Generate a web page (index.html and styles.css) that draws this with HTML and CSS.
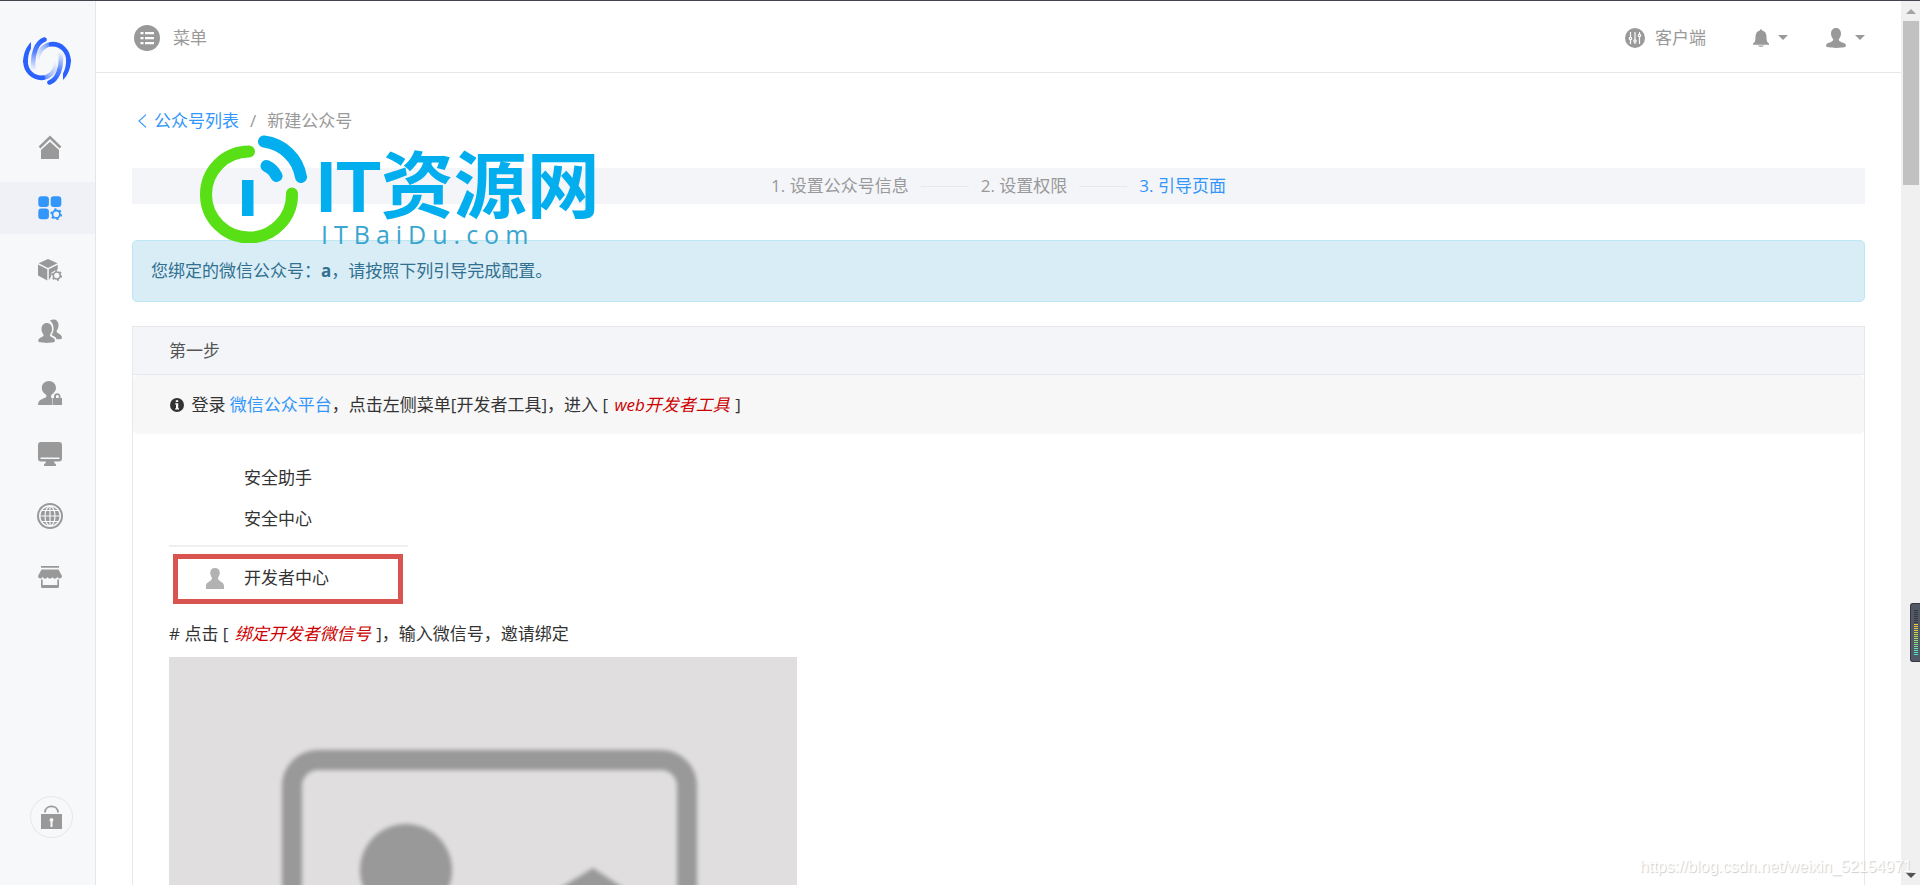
FILE: index.html
```html
<!DOCTYPE html>
<html lang="zh-CN">
<head>
<meta charset="utf-8">
<title>新建公众号</title>
<link rel="stylesheet" href="styles.css">
</head>
<body>
<div class="app">
  <aside class="sidebar">
    <a class="brand" href="#" aria-label="logo">
      <svg class="line-art" width="48" height="48" viewBox="0 0 48 48" stroke-width="4.600" stroke-linecap="round">
        <defs>
          <linearGradient id="fadeA" gradientUnits="userSpaceOnUse" x1="30" y1="44" x2="38" y2="15"><stop offset="0" stop-color="#2b62ff"/><stop offset=".4" stop-color="#2b62ff" stop-opacity=".8"/><stop offset="1" stop-color="#2b62ff" stop-opacity="0"/></linearGradient>
          <linearGradient id="fadeB" gradientUnits="userSpaceOnUse" x1="18" y1="4" x2="10" y2="33"><stop offset="0" stop-color="#2b62ff"/><stop offset=".4" stop-color="#2b62ff" stop-opacity=".8"/><stop offset="1" stop-color="#2b62ff" stop-opacity="0"/></linearGradient>
          <linearGradient id="fadeC" gradientUnits="userSpaceOnUse" x1="34" y1="8" x2="14" y2="22"><stop offset="0" stop-color="#2b62ff"/><stop offset=".5" stop-color="#2b62ff" stop-opacity=".4"/><stop offset="1" stop-color="#2b62ff" stop-opacity="0"/></linearGradient>
          <linearGradient id="fadeD" gradientUnits="userSpaceOnUse" x1="14" y1="40" x2="34" y2="26"><stop offset="0" stop-color="#2b62ff"/><stop offset=".5" stop-color="#2b62ff" stop-opacity=".4"/><stop offset="1" stop-color="#2b62ff" stop-opacity="0"/></linearGradient>
        </defs>
        <path d="M26.500 45.500C34 43 39.500 31 37.500 16" stroke="url(#fadeA)"/>
        <path d="M21.500 2.500C14 5 8.500 17 10.500 32" stroke="url(#fadeB)"/>
        <path d="M14 24C15 15 20 8.500 28 7.200" stroke="url(#fadeC)"/>
        <path d="M34 24C33 33 28 39.500 20 40.800" stroke="url(#fadeD)"/>
        <path d="M28 7.200C38 6.500 45.500 14 45.500 24" stroke="#2b62ff"/>
        <path d="M43.200 22H47.900C48 31 45 38 40 43V36.500C42.500 32 43.200 27 43.200 22Z" fill="#2b62ff" stroke="none"/>
        <path d="M20 40.800C10 41.500 2.500 34 2.500 24" stroke="#2b62ff"/>
        <path d="M4.800 26H.1C0 17 3 10 8 5V11.500C5.500 16 4.800 21 4.800 26Z" fill="#2b62ff" stroke="none"/>
      </svg>
    </a>
    <nav class="menu">
      <a href="#" aria-label="首页"><svg class="icon" viewBox="0 0 24 24"><path d="M1.500 12.500 12 2.300l10.500 10.200" fill="none" stroke="currentColor" stroke-width="2.500"/><path d="M12 6.800 21 15v8.500a.5.5 0 0 1-.5.5h-17a.5.5 0 0 1-.5-.5V15z"/></svg></a>
      <a class="active" href="#" aria-label="应用"><svg class="icon" viewBox="0 0 24 24"><rect x=".3" y=".3" width="10.600" height="10.600" rx="3"/><rect x="12.700" y=".3" width="10.600" height="10.600" rx="3"/><rect x=".3" y="12.600" width="10.600" height="10.600" rx="3"/><g fill="none" stroke="currentColor"><circle cx="18.200" cy="18.200" r="3.700" stroke-width="1.800"/><circle cx="18.200" cy="18.200" r="5" stroke-width="1.800" stroke-dasharray="2.200 3.036"/></g></svg></a>
      <a href="#" aria-label="产品"><svg class="icon" viewBox="0 0 24 24"><path d="m10 1 9.500 4.300L10 10 .7 5.300z"/><path d="M0 6.500 9.300 11.200V22.500L0 17.500zM10.800 11.200 19.700 6.700V11.500L17 12.500l-3.500 2-.5 4.500-2.200 3z"/><g fill="none" stroke="currentColor"><circle cx="18.800" cy="17.500" r="3.500" stroke-width="1.700"/><circle cx="18.800" cy="17.500" r="4.700" stroke-width="1.500" stroke-dasharray="2 2.922"/></g></svg></a>
      <a href="#" aria-label="用户组"><svg class="icon" viewBox="0 0 24 24"><path d="M12 1.500C16 -1 20.500 1 20.500 6c0 3-1 4.500-2 6 0 3 5.500 2.500 5.500 7 0 1-2 1.500-5.500 1.200C18 17.500 15 17 13.500 16c3-4 3-11-1.500-14.500z"/><path d="M8.800 4C12 4 14 6.500 14 10c0 3-1.200 4.500-2.200 6 0 2.500 5.200 2 5.200 6 0 2.500-16.800 2.500-16.800 0 0-4 5.500-3.500 5.500-6-1-1.500-2.200-3-2.200-6 0-3.500 2.200-6 5.300-6z"/></svg></a>
      <a href="#" aria-label="权限"><svg class="icon" viewBox="0 0 24 24"><path d="M11 0c4 0 7 3 7 7 0 2-1 3-2 4.500-1 1.500-3 2-3 3.500 0 1 .5 2 1 2.500V24H0c0-7 8.500-6 8.500-9 0-1.500-2-2-3-3.500-1-1.500-1.700-2.500-1.700-4.500 0-4 3-7 7.200-7z"/><path d="M15 17h1v-1.500c0-4.500 6.500-4.500 6.500 0V17H24v7h-9.500v-7zm3 0h2.800v-1.500c0-2-2.800-2-2.800 0z"/></svg></a>
      <a href="#" aria-label="设备"><svg class="icon" viewBox="0 0 24 24"><path fill-rule="evenodd" d="M3 0h18a3 3 0 0 1 3 3v13.500a3 3 0 0 1-3 3h-5c0 2 2 2 2 3.500V24H6v-1c0-1.500 2-1.500 2-3.500H3a3 3 0 0 1-3-3V3a3 3 0 0 1 3-3zM2.500 15.500v1.500h19v-1.500z"/></svg></a>
      <a href="#" aria-label="网站"><svg class="icon globe" viewBox="0 0 26 26"><circle cx="13" cy="13" r="12" fill="none" stroke="currentColor" stroke-width="2"/><circle cx="13" cy="13" r="9.600"/><g fill="none" stroke="#f6f8fa" stroke-width="1.200"><path d="M13 3v20M3 13h20M5 7.500h16M5 18.500h16"/><ellipse cx="13" cy="13" rx="5" ry="9.700"/></g></svg></a>
      <a href="#" aria-label="商店"><svg class="icon" viewBox="0 0 24 24"><path d="M3 1h18v1.800H3zM3.500 4.500h17L24 11c0 3-4 3.500-4.500.5-.5 2.500-4 3-5 .5-1 2-4 2-5 0-1 2.500-4.500 2-5-.5C4 14.500 0 14 0 11z"/><path d="M3 14.500h1.700V20h14.600v-5.500H21v7.300c0 .7-.4 1.200-1 1.200H4c-.6 0-1-.5-1-1.200z"/></svg></a>
    </nav>
    <button class="lock" aria-label="锁定"><svg width="21" height="24" viewBox="0 0 21 24"><path d="M4 7.500C4 -.8 17 -.8 17 7.500" fill="none" stroke="currentColor" stroke-width="1.800"/><path fill-rule="evenodd" d="M0 9h21v15H0zm10.500 4a2 2 0 0 0-1 3.700V22h2v-5.300a2 2 0 0 0-1-3.700z"/></svg></button>
  </aside>

  <div class="page">
    <header class="topbar">
      <button class="tool menu-toggle"><svg width="26" height="26" viewBox="0 0 26 26"><circle cx="13" cy="13" r="13"/><g fill="#fff"><path d="M6.500 7h3v2.200h-3zM11 7h9v2.200h-9zM6.500 12h3v2.200h-3zM11 12h9v2.200h-9zM6.500 17h3v2.200h-3zM11 17h9v2.200h-9z"/></g></svg><span>菜单</span></button>
      <div class="tools">
        <button class="tool"><svg width="20" height="20" viewBox="0 0 20 20"><circle cx="10" cy="10" r="10"/><g stroke="#fff" fill="#999" stroke-width="1.200"><path d="M5.500 4v12M10 4v12M14.500 4v12"/><circle cx="5.500" cy="10.500" r="1.200"/><circle cx="10" cy="13" r="1.200"/><circle cx="14.500" cy="7.500" r="1.200"/></g></svg><span>客户端</span></button>
        <button class="tool drop" aria-label="通知"><svg width="16" height="18" viewBox="0 0 16 18"><path d="M7 1.500C7-.3 9-.3 9 1.500c3 .6 4.500 3 4.500 6 0 4 .5 6 2.500 7v1.200H0v-1.200c2-1 2.500-3 2.500-7 0-3 1.500-5.400 4.500-6zM5 16.400h6c-.8 1.800-5.200 1.800-6 0z"/></svg><i class="caret"></i></button>
        <button class="tool drop" aria-label="账户"><svg width="20" height="20" viewBox="0 0 20 20"><path d="M10 0c3.300 0 5 2.500 5 5.500 0 3-1.300 4.500-2.300 6 0 3.500 7.300 2 7.300 6.500 0 2.500-20 2.500-20 0 0-4.500 7.300-3 7.300-6.500C6.300 10 5 8.500 5 5.500 5 2.500 6.700 0 10 0z"/></svg><i class="caret"></i></button>
      </div>
    </header>

    <main class="content">
      <nav class="breadcrumb">
        <a href="#"><svg width="9" height="14" viewBox="0 0 9 14"><path d="M8 .7 1 7l7 6.300" fill="none" stroke="currentColor" stroke-width="1.100"/></svg>公众号列表</a>
        <span class="slash">/</span>
        <span>新建公众号</span>
      </nav>

      <ol class="steps">
        <li>1. 设置公众号信息</li>
        <li>2. 设置权限</li>
        <li class="current">3. 引导页面</li>
      </ol>

      <div class="alert">您绑定的微信公众号：<strong>a</strong>，请按照下列引导完成配置。</div>

      <section class="panel">
        <h2 class="panel-title">第一步</h2>
        <p class="well"><svg class="info" width="14" height="14" viewBox="0 0 14 14"><circle cx="7" cy="7" r="7"/><path fill="#fff" d="M5.800 2.200h2.400V4H5.800zM5.200 5.200h3v5h.8v1.200H5.200v-1.200H6V6.400h-.8z"/></svg> 登录 <a href="#">微信公众平台</a>，点击左侧菜单[开发者工具]，进入 [ <em>web开发者工具</em> ]</p>
        <div class="panel-body">
          <div class="snippet">
            <div>安全助手</div>
            <div>安全中心</div>
            <hr>
            <div class="marked"><svg width="18" height="21" viewBox="0 0 18 21"><path d="M9 0c3 0 4.800 2 4.800 4.800 0 2.700-1.300 3.700-1.800 5.200 0 3.500 6 3.500 6 8v3H0v-3c0-4.500 6-4.500 6-8-.5-1.500-1.800-2.500-1.800-5.200C4.200 2 6 0 9 0z"/></svg><span>开发者中心</span></div>
          </div>
          <p class="hint"># 点击 [ <em>绑定开发者微信号</em> ]，输入微信号，邀请绑定</p>
          <svg class="placeholder" width="628" height="420" viewBox="0 0 628 420">
            <defs><filter id="soft"><feGaussianBlur stdDeviation="2"/></filter></defs>
            <rect width="628" height="420" fill="#e0dede"/>
            <g filter="url(#soft)">
              <rect x="123" y="103" width="395" height="300" rx="26" fill="none" stroke="#999" stroke-width="20"/>
              <circle cx="237" cy="213" r="46" fill="#999"/>
              <path d="M360 250 424 211 520 274V380H200z" fill="#999"/>
            </g>
          </svg>
        </div>
      </section>
    </main>
  </div>

  <div class="scrollbar">
    <i class="arrow up"></i>
    <i class="thumb"></i>
    <i class="arrow down"></i>
  </div>
</div>

<div class="stamp">
  <svg class="line-art" width="108" height="108" viewBox="0 0 108 108" stroke-width="12" stroke-linecap="round">
    <path d="M49 16.500A43 43 0 1 0 92 58.500" stroke="#59df15"/>
    <path d="M64 6.500A43 43 0 0 1 101 42" stroke="#03aeee"/>
    <path d="M66.500 31Q73 34 76.500 41" stroke="#03aeee"/>
    <path d="M42 45h11.500v36H42z" fill="#03aeee" stroke="none"/>
  </svg>
  <div class="stamp-text">
    <div class="stamp-name">IT资源网</div>
    <div class="stamp-site">ITBaiDu.com</div>
  </div>
</div>
<div class="source">https://blog.csdn.net/weixin_52154971</div>
<div class="meter"><i class="idle"></i><i class="level"></i></div>
</body>
</html>
```
FILE: styles.css
```css
* { box-sizing: border-box; }

body {
  margin: 0;
  overflow: hidden;
  font: 17px/24px "Open Sans", "Noto Sans CJK SC", sans-serif;
  color: #333;
  background: #fff;
}

a { color: #3296fa; text-decoration: none; }
button { padding: 0; border: 0; background: none; font: inherit; color: #999; }
svg { display: block; fill: currentColor; }
.line-art { fill: none; }
em { margin: 0 1px 0 2px; color: #c00; }

.app {
  display: flex;
  height: 100vh;
  border-top: 1px solid #45434b;
}

/* Sidebar */
.sidebar {
  flex: none;
  display: flex;
  flex-direction: column;
  width: 96px;
  padding: 36px 0 47px;
  background: #f6f8fa;
  border-right: 1px solid #e4e6ea;
}
.brand { margin-left: 23px; }
.menu {
  display: flex;
  flex-direction: column;
  justify-content: space-between;
  height: 482px;
  margin-top: 36px;
}
.menu a {
  display: flex;
  align-items: center;
  justify-content: center;
  height: 52px;
  padding-left: 5px;
  color: #999;
}
.menu .active { color: #3296fa; background: #eff1f6; }
.icon { width: 24px; height: 24px; }
.globe { width: 26px; height: 26px; }
.lock {
  display: flex;
  align-items: center;
  justify-content: center;
  width: 43px;
  height: 42px;
  margin: auto auto 0 30px;
  border: 1px solid #e7e7eb;
  border-radius: 50%;
}

/* Top bar */
.page { flex: 1; min-width: 0; overflow: hidden; }
.topbar {
  display: flex;
  align-items: center;
  justify-content: space-between;
  height: 72px;
  padding: 2px 36px 0 38px;
  border-bottom: 1px solid #e7e8eb;
}
.tool { display: flex; align-items: center; gap: 10px; }
.menu-toggle { gap: 13px; }
.tools { display: flex; gap: 47px; }
.drop { gap: 9px; }
.drop + .drop { margin-left: -9px; }
.caret {
  border: 5px solid transparent;
  border-top-color: currentColor;
  border-bottom: 0;
}

/* Content */
.content { padding: 36px; }
.breadcrumb {
  display: flex;
  padding-left: 6px;
  margin-bottom: 35px;
  color: #999;
}
.breadcrumb a { display: flex; align-items: center; gap: 7px; }
.slash { margin: 0 11px; }
.steps {
  display: flex;
  justify-content: center;
  gap: 12px;
  margin: 0 0 36px;
  padding: 0;
  list-style: none;
  line-height: 36px;
  color: #999;
  background: #f4f5f9;
}
.steps li { display: flex; align-items: center; gap: 12px; }
.steps li + li::before { content: ""; width: 48px; height: 1px; background: #e7e8eb; }
.steps .current { color: #3296fa; }
.alert {
  margin-bottom: 24px;
  padding: 18px;
  color: #31708f;
  background: #d9edf7;
  border: 1px solid #bce8f1;
  border-radius: 5px;
}
.panel { border: 1px solid #e7e8eb; }
.panel-title {
  margin: 0;
  padding: 12px 36px 11px;
  font-size: 17px;
  font-weight: 400;
  color: #555;
  background: #f4f5f9;
  border-bottom: 1px solid #e7e8eb;
}
.well {
  margin: 0;
  padding: 18px 36px 17px;
  background: #f7f7f7;
  border-radius: 5px;
}
.info { display: inline-block; vertical-align: -1px; margin: 0 3px 0 1px; }
.panel-body { padding: 32px 36px; }
.snippet { width: 239px; }
.snippet > div { margin-bottom: 17px; padding-left: 75px; }
.snippet hr { height: 2px; margin: -3px 0 7px; border: 0; background: #efefef; }
.snippet .marked {
  display: flex;
  align-items: center;
  gap: 20px;
  height: 50px;
  margin: 0 5px 18px 4px;
  padding: 0 0 2px 28px;
  border: 5px solid #d9534f;
}
.marked svg { color: #b2b2b2; }
.hint { margin: 0 0 11px; }
.placeholder { max-width: 100%; }

/* Scroll bar */
.scrollbar {
  flex: none;
  display: flex;
  flex-direction: column;
  align-items: center;
  width: 19px;
  padding: 8px 0 7px;
  background: #f0f0f0;
}
.thumb { width: 16px; height: 164px; margin-top: 7px; background: #c1c1c1; }
.arrow { border: 5px solid transparent; }
.up { border-top: 0; border-bottom-color: #a3a3a3; }
.down { margin-top: auto; border-bottom: 0; border-top-color: #505050; }

/* Overlays */
.stamp {
  position: absolute;
  top: 135px;
  left: 200px;
  display: flex;
  gap: 8px;
}
.stamp-text { padding-top: 19px; color: #03aeee; }
.stamp-name {
  font: 700 73px/66px "Liberation Sans", "Noto Sans CJK SC", sans-serif;
  white-space: nowrap;
}
.stamp-site {
  padding-left: 5px;
  font: 400 25px/28px "Open Sans", sans-serif;
  letter-spacing: 6px;
  color: #3aa5cf;
}
.source {
  position: absolute;
  right: 8px;
  bottom: 6px;
  font: 16px/24px "Liberation Sans", sans-serif;
  color: #fff;
  text-shadow: 1px 1px 1px #ccc;
}
.meter {
  position: absolute;
  top: 603px;
  right: 0;
  width: 10px;
  height: 59px;
  padding: 6px 2px 7px 3px;
  background: #535867;
  border: 1px solid #353842;
  border-right: 0;
  border-radius: 3px 0 0 3px;
}
.meter i { display: block; width: 4px; }
.idle { height: 14px; background: repeating-linear-gradient(#353842 0 1px, transparent 1px 2px); }
.level {
  height: 31px;
  background: repeating-linear-gradient(transparent 0 1px, #535867 1px 2px), linear-gradient(#f6c832, #b5d95a 40%, #3fe5d0);
}
```
